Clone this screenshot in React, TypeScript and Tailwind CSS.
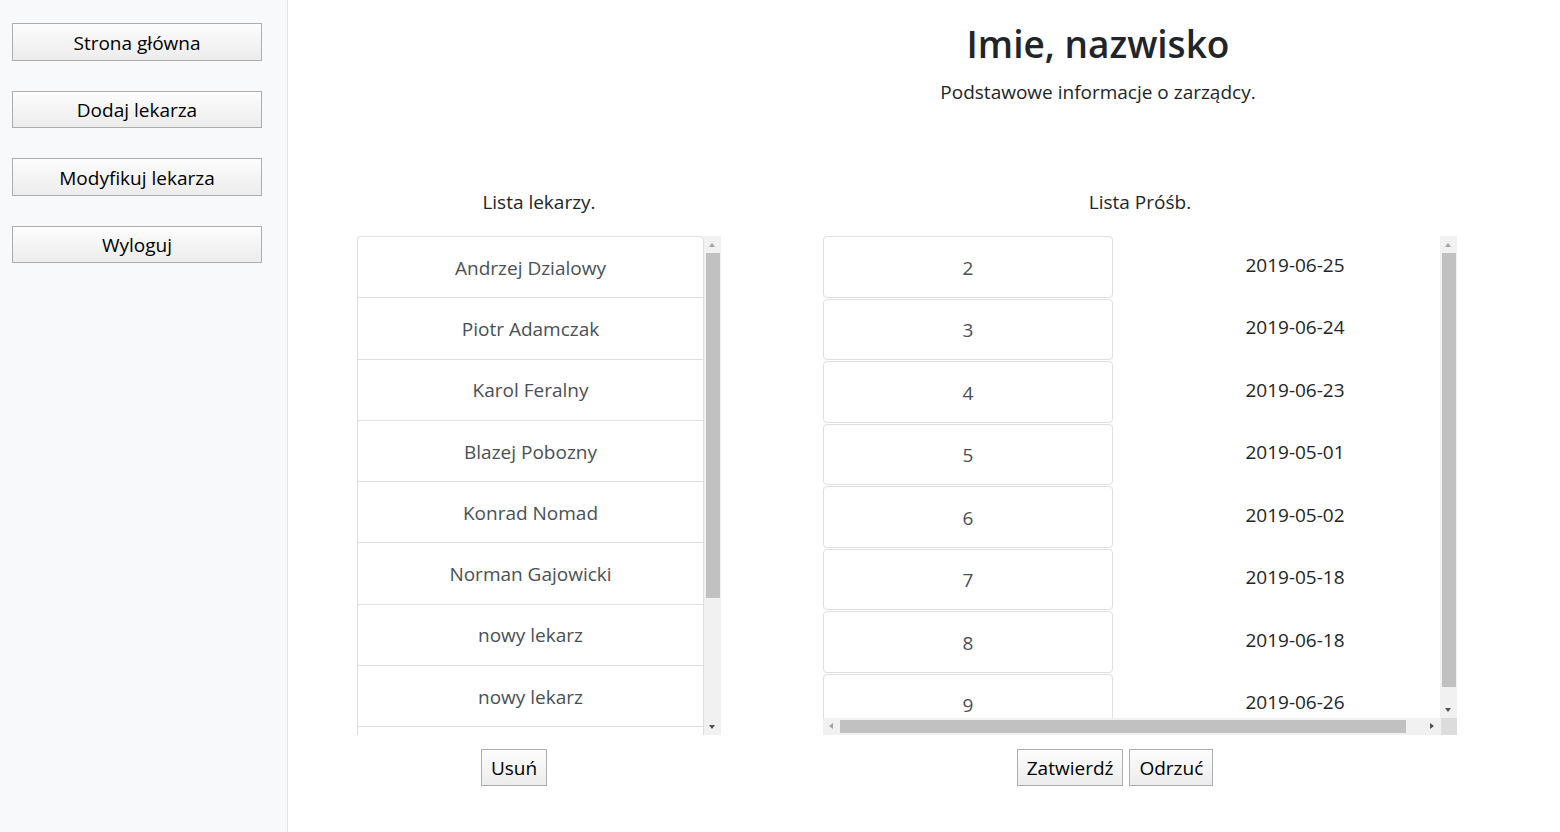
import React from "react";

const font = { fontFamily: '"Open Sans", "Noto Sans", sans-serif' };

const doctors = [
  "Andrzej Dzialowy",
  "Piotr Adamczak",
  "Karol Feralny",
  "Blazej Pobozny",
  "Konrad Nomad",
  "Norman Gajowicki",
  "nowy lekarz",
  "nowy lekarz",
  "",
];

const requests: [string, string][] = [
  ["2", "2019-06-25"],
  ["3", "2019-06-24"],
  ["4", "2019-06-23"],
  ["5", "2019-05-01"],
  ["6", "2019-05-02"],
  ["7", "2019-05-18"],
  ["8", "2019-06-18"],
  ["9", "2019-06-26"],
];

function SideButton({ label }: { label: string }) {
  return (
    <button className="w-[250px] h-[37.5px] pt-[3px] border border-[#adadad] bg-linear-to-b from-[#fdfdfd] to-[#ececec] text-[19px] text-black leading-none flex items-center justify-center">
      {label}
    </button>
  );
}

function Btn({ label }: { label: string }) {
  return (
    <button className="h-[37px] px-[9px] pt-[2px] border border-[#adadad] bg-linear-to-b from-[#fdfdfd] to-[#ececec] text-[19px] text-black leading-none flex items-center justify-center">
      {label}
    </button>
  );
}

function VScroll({ thumbTop, thumbHeight, height }: { thumbTop: number; thumbHeight: number; height: number }) {
  return (
    <div className="relative w-[17px] bg-[#f1f1f1] shrink-0" style={{ height }}>
      <div className="absolute left-[5px] top-[7px] w-0 h-0 border-l-[3.5px] border-r-[3.5px] border-b-[4px] border-l-transparent border-r-transparent border-b-[#a3a3a3]" />
      <div className="absolute left-[2px] right-[1px] bg-[#c1c1c1]" style={{ top: thumbTop, height: thumbHeight }} />
      <div className="absolute left-[5px] bottom-[6px] w-0 h-0 border-l-[3.5px] border-r-[3.5px] border-t-[4px] border-l-transparent border-r-transparent border-t-[#505050]" />
    </div>
  );
}

export default function App() {
  return (
    <div className="flex w-[1560px] h-[832px] bg-white text-[#212529] overflow-hidden" style={font}>
      <aside className="w-[288px] h-full bg-[#f8f9fa] border-r border-[#e3e3e3] pt-[23px] pl-[12px] flex flex-col gap-[30px] shrink-0">
        <SideButton label="Strona główna" />
        <SideButton label="Dodaj lekarza" />
        <SideButton label="Modyfikuj lekarza" />
        <SideButton label="Wyloguj" />
      </aside>

      <main className="flex-1 flex flex-col">
        <header className="ml-auto w-[924px] pt-[20px] text-center">
          <h1 className="text-[37px] font-semibold leading-[48px] mb-[8px]">Imie, nazwisko</h1>
          <p className="text-[19px] leading-[32px]">Podstawowe informacje o zarządcy.</p>
        </header>

        <div className="flex ml-[69px] gap-[102px] mt-[79px]">
          {/* Left column */}
          <section className="w-[364px] flex flex-col">
            <h2 className="text-[19px] leading-[30px] text-center mb-[19px]">Lista lekarzy.</h2>
            <div className="flex h-[499px]">
              <div className="w-[348px] h-full overflow-hidden">
                {doctors.map((d, i) => (
                  <div
                    key={i}
                    className={`h-[61.25px] pt-[2px] border-l border-r border-t border-[#dfdfdf] bg-white flex items-center justify-center text-[19px] text-[#495057] ${i === 0 ? "rounded-t-[4px]" : ""}`}
                  >
                    {d}
                  </div>
                ))}
              </div>
              <VScroll thumbTop={17} thumbHeight={345} height={499} />
            </div>
            <div className="flex justify-center pr-[50px] mt-[14px]">
              <Btn label="Usuń" />
            </div>
          </section>

          {/* Right column */}
          <section className="w-[634px] flex flex-col">
            <h2 className="text-[19px] leading-[30px] text-center mb-[19px]">Lista Próśb.</h2>
            <div className="flex flex-col h-[499px]">
              <div className="flex h-[482px]">
                <div className="w-[618px] h-full overflow-hidden">
                  {requests.map(([n, d], i) => (
                    <div key={i} className="h-[62.5px] flex">
                      <div className="w-[290px] h-[61.5px] pt-[2px] border border-[#dfdfdf] rounded-[4px] bg-white flex items-center justify-center text-[19px] text-[#495057] shrink-0">
                        {n}
                      </div>
                      <div className="w-[364px] shrink-0 flex items-center justify-center text-[19px] text-[#212529] pb-[5px]">
                        {d}
                      </div>
                    </div>
                  ))}
                </div>
                <VScroll thumbTop={17} thumbHeight={434} height={482} />
              </div>
              <div className="flex h-[17px]">
                <div className="relative w-[618px] h-full bg-[#f1f1f1]">
                  <div className="absolute top-[5px] left-[6px] w-0 h-0 border-t-[3.5px] border-b-[3.5px] border-r-[4px] border-t-transparent border-b-transparent border-r-[#a3a3a3]" />
                  <div className="absolute top-[2px] bottom-[2px] left-[17px] w-[566px] bg-[#c1c1c1]" />
                  <div className="absolute top-[5px] right-[7px] w-0 h-0 border-t-[3.5px] border-b-[3.5px] border-l-[4px] border-t-transparent border-b-transparent border-l-[#505050]" />
                </div>
                <div className="w-[16px] h-full bg-[#dcdcdc]" />
              </div>
            </div>
            <div className="flex justify-center pr-[50px] mt-[14px] gap-[6px]">
              <Btn label="Zatwierdź" />
              <Btn label="Odrzuć" />
            </div>
          </section>
        </div>
      </main>
    </div>
  );
}
